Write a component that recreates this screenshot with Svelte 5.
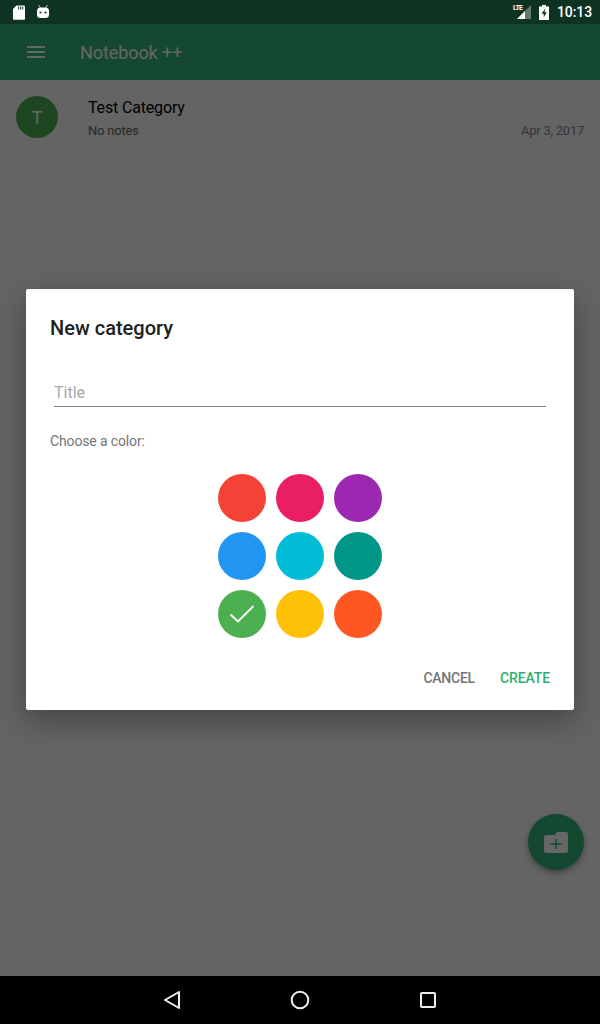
<script>
  const colors = [
    "#f44336", "#e91e63", "#9c27b0",
    "#2196f3", "#00bcd4", "#009688",
    "#4caf50", "#ffc107", "#ff5722"
  ];
  const selected = "#4caf50";
</script>

<div class="screen">
  <div class="status">
    <div class="status-left">
      <svg width="14" height="16" viewBox="0 0 14 16">
        <path d="M4.500 1.500H12a1 1 0 0 1 1 1V15a.8.8 0 0 1-.8.8H1.800A.8.8 0 0 1 1 15V5Z" fill="#fff" />
        <path d="M6.200 2.500h1v3h-1zM8.200 2.500h1v3h-1zM10.200 2.500h1v3h-1z" fill="#123a27" />
      </svg>
      <svg class="droid" width="14" height="16" viewBox="0 0 14 16">
        <path d="M2.500 1 4.500 4M11.500 1 9.500 4" stroke="#bbb" stroke-width="1" fill="none" />
        <rect x="1" y="3.500" width="12" height="10.500" rx="3.500" fill="#fff" />
        <circle cx="4.500" cy="8.500" r="1.100" fill="#123a27" />
        <circle cx="9.500" cy="8.500" r="1.100" fill="#123a27" />
      </svg>
    </div>
    <div class="status-right">
      <span class="signal">
        <span class="lte">LTE</span>
        <svg width="14" height="14" viewBox="0 0 14 14">
          <path d="M14 0V14H0Z" fill="#fff" fill-opacity="0.35" />
          <path d="M8 6V14H0Z" fill="#fff" />
        </svg>
      </span>
      <svg width="10" height="15" viewBox="0 0 10 15">
        <path d="M3 0h4v1.500h3V15H0V1.500h3Z" fill="#fff" />
        <path d="M6.200 3.500 2.500 8.800h2.200V12.500L7.800 7.300H5.600Z" fill="#123a27" />
      </svg>
      <span class="clock">10:13</span>
    </div>
  </div>

  <header class="toolbar">
    <svg width="18" height="12" viewBox="0 0 18 12">
      <path d="M0 0h18v2H0zM0 5h18v2H0zM0 10h18v2H0z" fill="#fff" />
    </svg>
    <span class="app-title">Notebook ++</span>
  </header>

  <main class="content">
    <div class="row">
      <div class="avatar">T</div>
      <div class="row-text">
        <div class="row-title">Test Category</div>
        <div class="row-sub">
          <span>No notes</span>
          <span class="date">Apr 3, 2017</span>
        </div>
      </div>
    </div>

    <button class="fab" aria-label="New category">
      <svg width="24" height="21" viewBox="0 0 24 21">
        <path d="M2 3h8.500L13 0h9a2 2 0 0 1 2 2v17a2 2 0 0 1-2 2H2a2 2 0 0 1-2-2V5a2 2 0 0 1 2-2Z" fill="#fff" />
        <path d="M11.300 7h1.400v4.300H17.500v1.400H12.700V17h-1.400v-4.300H6.500v-1.400h4.800Z" fill="#34b478" />
      </svg>
    </button>

    <div class="scrim">
      <div class="dialog">
        <h2>New category</h2>
        <div class="field">Title</div>
        <p class="choose">Choose a color:</p>
        <div class="swatches">
          {#each colors as color}
            <div class="swatch" style="background: {color}">
              {#if color === selected}
                <svg width="26" height="20" viewBox="0 0 26 20">
                  <path d="M1.500 10.500 9 17.500 24.500 2" stroke="#fff" stroke-width="1.800" fill="none" />
                </svg>
              {/if}
            </div>
          {/each}
        </div>
        <div class="actions">
          <span class="cancel">CANCEL</span>
          <span class="create">CREATE</span>
        </div>
      </div>
    </div>
  </main>

  <nav class="navbar">
    <svg width="18" height="20" viewBox="0 0 18 20">
      <path d="M16 2V18L2 10Z" stroke="#eee" stroke-width="2" stroke-linejoin="round" fill="none" />
    </svg>
    <svg width="20" height="20" viewBox="0 0 20 20">
      <circle cx="10" cy="10" r="8.300" stroke="#eee" stroke-width="2" fill="none" />
    </svg>
    <svg width="18" height="18" viewBox="0 0 18 18">
      <rect x="2" y="2" width="14" height="14" rx="1" stroke="#eee" stroke-width="2" fill="none" />
    </svg>
  </nav>
</div>

<style>
  :global(body) {
    margin: 0;
  }

  .screen {
    width: 600px;
    height: 1024px;
    display: flex;
    flex-direction: column;
    font-family: Roboto, sans-serif;
    background: #fafafa;
    overflow: hidden;
  }

  .status {
    height: 24px;
    flex: none;
    background: #0f3323;
    color: #fff;
    display: flex;
    align-items: center;
    justify-content: space-between;
    padding: 0 8px 0 12px;
    box-sizing: border-box;
  }

  .status-left {
    display: flex;
    align-items: center;
    gap: 10px;
  }

  .status-right {
    display: flex;
    align-items: center;
    gap: 8px;
  }

  .signal {
    position: relative;
    display: flex;
    width: 14px;
    height: 14px;
  }

  .lte {
    position: absolute;
    left: -4px;
    top: -1px;
    font-size: 7px;
    font-weight: 700;
    line-height: 8px;
    letter-spacing: -0.6px;
  }

  .clock {
    font-size: 14px;
    font-weight: 500;
    letter-spacing: -0.1px;
  }

  .toolbar {
    position: relative;
    height: 56px;
    flex: none;
    background: #34b478;
    color: #fff;
    display: flex;
    align-items: center;
    padding-left: 27px;
    box-sizing: border-box;
  }

  .app-title {
    font-size: 18px;
    margin-left: 35px;
    letter-spacing: -0.08px;
  }

  .content {
    position: relative;
    flex: 1;
    margin-top: -56px;
    padding-top: 56px;
  }

  .row {
    display: flex;
    padding: 16px 16px 0;
    height: 58px;
  }

  .avatar {
    width: 42px;
    height: 42px;
    border-radius: 50%;
    background: #4caf50;
    color: #fff;
    font-size: 18px;
    display: flex;
    align-items: center;
    justify-content: center;
    flex: none;
  }

  .row-text {
    flex: 1;
    margin-left: 30px;
    padding-top: 1px;
  }

  .row-title {
    font-size: 16px;
    line-height: 22px;
    letter-spacing: -0.16px;
    color: #000;
  }

  .row-sub {
    display: flex;
    justify-content: space-between;
    align-items: center;
    font-size: 13px;
    line-height: 18px;
    margin-top: 3px;
    color: #666;
  }

  .row-sub span:first-child {
    letter-spacing: -0.2px;
  }

  .date {
    color: #888;
    letter-spacing: -0.25px;
  }

  .fab {
    position: absolute;
    right: 16px;
    bottom: 106px;
    width: 56px;
    height: 56px;
    padding: 0;
    border: none;
    border-radius: 50%;
    background: #34b478;
    box-shadow: 0 3px 6px rgba(0, 0, 0, 0.35);
    display: flex;
    align-items: center;
    justify-content: center;
  }

  .scrim {
    position: absolute;
    inset: 0;
    background: rgba(0, 0, 0, 0.6);
    display: flex;
    align-items: center;
    justify-content: center;
  }

  .dialog {
    width: 548px;
    height: 421px;
    margin-bottom: 1px;
    background: #fff;
    border-radius: 2px;
    box-shadow: 0 11px 30px rgba(0, 0, 0, 0.32);
    padding: 25px 24px 22px;
    box-sizing: border-box;
    display: flex;
    flex-direction: column;
  }

  h2 {
    margin: 0;
    font-size: 20px;
    font-weight: 500;
    line-height: 28px;
    color: #212121;
  }

  .field {
    margin: 39px 4px 0;
    height: 25px;
    font-size: 16px;
    line-height: 24px;
    color: #a8a8a8;
    border-bottom: 1px solid #808080;
  }

  .choose {
    margin: 25px 0 0;
    font-size: 14px;
    line-height: 18px;
    letter-spacing: -0.14px;
    color: #757575;
  }

  .swatches {
    display: grid;
    grid-template-columns: repeat(3, 48px);
    gap: 10px;
    justify-content: center;
    margin-top: 24px;
  }

  .swatch {
    width: 48px;
    height: 48px;
    border-radius: 50%;
    display: flex;
    align-items: center;
    justify-content: center;
  }

  .actions {
    display: flex;
    justify-content: flex-end;
    gap: 25px;
    margin-top: 30px;
    font-size: 14px;
    font-weight: 500;
    line-height: 20px;
    letter-spacing: -0.1px;
  }

  .cancel {
    color: #757575;
    letter-spacing: -0.25px;
  }

  .create {
    color: #30ae72;
  }

  .navbar {
    height: 48px;
    flex: none;
    background: #000;
    display: flex;
    align-items: center;
    justify-content: center;
    gap: 109px;
    position: relative;
  }
</style>
